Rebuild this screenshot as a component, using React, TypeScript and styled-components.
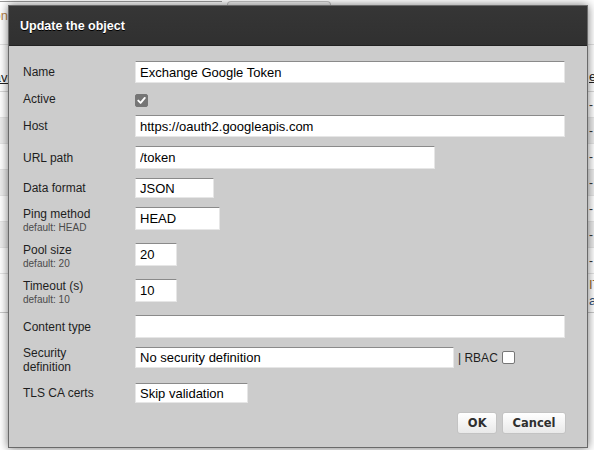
import React from "react";
import styled, { createGlobalStyle } from "styled-components";

const GlobalStyle = createGlobalStyle`
  html, body { margin: 0; padding: 0; }
  body {
    width: 594px;
    height: 450px;
    overflow: hidden;
    background: #ffffff;
    font-family: "Liberation Sans", Arial, sans-serif;
  }
`;

const Page = styled.div`
  position: relative;
  width: 594px;
  height: 450px;
  overflow: hidden;
  background: #ffffff;
`;

/* ---------- background page (behind the dialog) ---------- */
const Backdrop = styled.div`
  display: flex;
  flex-direction: column;
  width: 100%;
`;

const TabStrip = styled.div`
  display: flex;
  align-items: flex-start;
  height: 6px;
  gap: 5px;
`;

const TabLine = styled.div`
  width: 222px;
  margin-top: 1px;
  border-top: 1px solid #9a9a9a;
`;

const Tab = styled.div`
  width: 102px;
  height: 4px;
  margin-top: 1px;
  border: 1px solid #c4c4c4;
  border-bottom: none;
  border-radius: 4px 4px 0 0;
  background: #f4f4f4;
`;

const PageTitle = styled.div`
  height: 38px;
  display: flex;
  align-items: flex-start;
  font-size: 13px;
  color: #b8834a;
  white-space: nowrap;
  border-bottom: 1px solid #e2e2e2;
  span { margin-left: -81px; margin-top: 2px; }
`;

const TableHead = styled.div`
  height: 47px;
  display: flex;
  justify-content: space-between;
  align-items: flex-end;
  padding-bottom: 6px;
  box-sizing: border-box;
  font-size: 13px;
  border-bottom: 1px solid #d8d8d8;
`;

const BgRow = styled.div<{ $alt?: boolean; $tall?: boolean }>`
  height: ${(p) => (p.$tall ? 39 : 26)}px;
  box-sizing: border-box;
  display: flex;
  justify-content: space-between;
  align-items: center;
  font-size: 12px;
  color: #333;
  background: ${(p) => (p.$alt ? "#ededed" : "#ffffff")};
  border-bottom: 1px solid ${(p) => (p.$tall ? "#c9c9c9" : "#e4e4e4")};
`;

const LeftCell = styled.div`
  white-space: nowrap;
  margin-left: -15px;
`;

const RightCell = styled.div`
  width: 5px;
  overflow: hidden;
  white-space: nowrap;
  line-height: 16px;
`;

const BgLink = styled.a`
  color: #222;
  text-decoration: underline;
`;

const TallText = styled.div<{ $tone: string }>`
  color: ${(p) => p.$tone};
  font-size: 13px;
`;

/* ---------- dialog ---------- */
const Dialog = styled.div`
  position: absolute;
  left: 8px;
  top: 5px;
  width: 580px;
  height: 443px;
  box-sizing: border-box;
  border: 1px solid #6a6a6a;
  background: #cccccc;
  box-shadow: 0 0 9px rgba(0, 0, 0, 0.55);
  display: flex;
  flex-direction: column;
`;

const TitleBar = styled.div`
  height: 39px;
  flex: none;
  display: flex;
  align-items: center;
  padding: 0 11px;
  background: linear-gradient(#363636, #303030);
  border-bottom: 1px solid #222;
  color: #ffffff;
  font-size: 12.5px;
  font-weight: bold;
  text-shadow: 0 1px 0 #000;
`;

const Body = styled.div`
  flex: 1;
  padding: 15px 21px 0 14px;
  display: flex;
  flex-direction: column;
`;

const Form = styled.div`
  display: grid;
  grid-template-columns: 112px 1fr;
  row-gap: 9px;
  align-items: stretch;
`;

const Label = styled.div<{ $tight?: boolean }>`
  display: flex;
  flex-direction: column;
  justify-content: center;
  font-size: 12px;
  line-height: ${(p) => (p.$tight ? "13.5px" : "14px")};
  color: #1e1e1e;
`;

const Hint = styled.span`
  font-size: 10px;
  line-height: 13px;
  color: #4a4a4a;
`;

const Field = styled.div`
  align-self: start;
  display: flex;
  align-items: center;
  gap: 4px;
`;

const TextInput = styled.input<{ $w: number; $h: number }>`
  width: ${(p) => p.$w}px;
  height: ${(p) => p.$h}px;
  box-sizing: border-box;
  margin: 0;
  padding: 0 4px;
  border: 1px solid #e6e6e6;
  border-top-color: #8a8a8a;
  border-radius: 0;
  background: #ffffff;
  font-family: "Liberation Sans", Arial, sans-serif;
  font-size: 13px;
  color: #000;
  outline: none;
`;

const Check = styled.span<{ $checked?: boolean; $shift?: boolean }>`
  display: inline-flex;
  align-items: center;
  justify-content: center;
  width: 13px;
  height: 13px;
  box-sizing: border-box;
  border-radius: 2px;
  margin: ${(p) => (p.$shift ? "2px 0 -2px" : "0")};
  background: ${(p) => (p.$checked ? "#757575" : "#ffffff")};
  border: 1px solid #767676;
`;

const Aside = styled.span`
  font-size: 12px;
  color: #1e1e1e;
`;

const Footer = styled.div`
  display: flex;
  justify-content: flex-end;
  gap: 5px;
  margin-top: 9px;
`;

const Button = styled.button`
  height: 22px;
  padding: 0 9.5px;
  border: 1px solid #c3c3c3;
  border-radius: 3px;
  background: linear-gradient(#ffffff, #e9e9e9);
  font-family: "DejaVu Sans", Verdana, sans-serif;
  font-size: 11.5px;
  font-weight: bold;
  color: #2f2f2f;
  cursor: pointer;
`;

const CheckMark = () => (
  <svg width="9" height="9" viewBox="0 0 9 9">
    <path d="M1.3 4.6 L3.6 6.9 L7.8 1.9" fill="none" stroke="#fff" strokeWidth="1.9" strokeLinecap="round" strokeLinejoin="round" />
  </svg>
);

export default function App() {
  const rows = [0, 1, 2, 3, 4, 5, 6];
  return (
    <Page>
      <GlobalStyle />
      <Backdrop>
        <TabStrip>
          <TabLine />
          <Tab />
        </TabStrip>
        <PageTitle>
          <span>Edit connection</span>
        </PageTitle>
        <TableHead>
          <LeftCell>
            <BgLink>Save</BgLink>
          </LeftCell>
          <RightCell>
            <BgLink>edit</BgLink>
          </RightCell>
        </TableHead>
        {rows.map((r) => (
          <BgRow key={r} $alt={r % 2 === 1}>
            <LeftCell />
            <RightCell>-</RightCell>
          </BgRow>
        ))}
        <BgRow $tall>
          <LeftCell />
          <RightCell>
            <TallText $tone="#9a6a2e">IT</TallText>
            <TallText $tone="#2d4f7a">a</TallText>
          </RightCell>
        </BgRow>
      </Backdrop>

      <Dialog>
        <TitleBar>Update the object</TitleBar>
        <Body>
          <Form>
            <Label>Name</Label>
            <Field>
              <TextInput $w={430} $h={22} defaultValue="Exchange Google Token" />
            </Field>

            <Label>Active</Label>
            <Field>
              <Check $checked $shift>
                <CheckMark />
              </Check>
            </Field>

            <Label>Host</Label>
            <Field>
              <TextInput $w={430} $h={22} defaultValue="https://oauth2.googleapis.com" />
            </Field>

            <Label>URL path</Label>
            <Field>
              <TextInput $w={300} $h={23} defaultValue="/token" />
            </Field>

            <Label>Data format</Label>
            <Field>
              <TextInput $w={79} $h={20} defaultValue="JSON" readOnly />
            </Field>

            <Label>
              <span>Ping method</span>
              <Hint>default: HEAD</Hint>
            </Label>
            <Field>
              <TextInput $w={85} $h={23} defaultValue="HEAD" />
            </Field>

            <Label>
              <span>Pool size</span>
              <Hint>default: 20</Hint>
            </Label>
            <Field>
              <TextInput $w={42} $h={23} defaultValue="20" />
            </Field>

            <Label>
              <span>Timeout (s)</span>
              <Hint>default: 10</Hint>
            </Label>
            <Field>
              <TextInput $w={42} $h={23} defaultValue="10" />
            </Field>

            <Label>Content type</Label>
            <Field>
              <TextInput $w={430} $h={23} defaultValue="" />
            </Field>

            <Label $tight>
              <span>Security</span>
              <span>definition</span>
            </Label>
            <Field>
              <TextInput $w={319} $h={21} defaultValue="No security definition" readOnly />
              <Aside>| RBAC</Aside>
              <Check />
            </Field>

            <Label>TLS CA certs</Label>
            <Field>
              <TextInput $w={113} $h={20} defaultValue="Skip validation" readOnly />
            </Field>
          </Form>
          <Footer>
            <Button>OK</Button>
            <Button>Cancel</Button>
          </Footer>
        </Body>
      </Dialog>
    </Page>
  );
}
